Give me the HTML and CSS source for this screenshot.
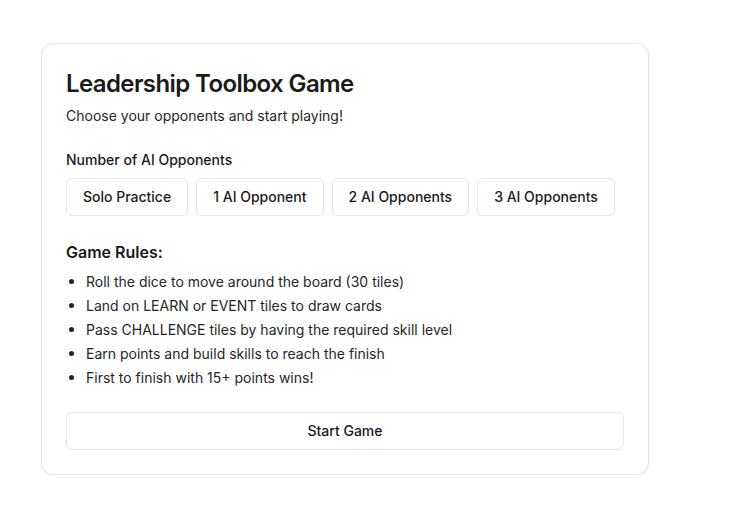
FILE: index.html
```html
<!DOCTYPE html>
<html lang="en">
<head>
<meta charset="utf-8">
<title>Leadership Toolbox Game</title>
<link rel="stylesheet" href="styles.css">
</head>
<body>
<main class="page">
  <section class="card">
    <h1 class="title">Leadership Toolbox Game</h1>
    <p class="subtitle">Choose your opponents and start playing!</p>

    <div class="field">
      <div class="label">Number of AI Opponents</div>
      <div class="options">
        <button class="btn">Solo Practice</button>
        <button class="btn">1 AI Opponent</button>
        <button class="btn">2 AI Opponents</button>
        <button class="btn">3 AI Opponents</button>
      </div>
    </div>

    <div class="rules">
      <h2 class="rules-title">Game Rules:</h2>
      <ul class="rules-list">
        <li>Roll the dice to move around the board (30 tiles)</li>
        <li>Land on LEARN or EVENT tiles to draw cards</li>
        <li>Pass CHALLENGE tiles by having the required skill level</li>
        <li>Earn points and build skills to reach the finish</li>
        <li>First to finish with 15+ points wins!</li>
      </ul>
    </div>

    <button class="btn btn-block">Start Game</button>
  </section>
</main>
</body>
</html>
```

FILE: styles.css
```css
* { box-sizing: border-box; }

body {
  margin: 0;
  background: #ffffff;
  font-family: Inter, "Noto Sans", "Liberation Sans", sans-serif;
  color: #1c1c1c;
}

.page {
  padding: 43px 0 0 41px;
}

.card {
  width: 608px;
  background: #fff;
  border: 1px solid #e5e5e5;
  border-radius: 12px;
  box-shadow: 0 1px 3px rgba(0,0,0,0.04);
  padding: 24px;
}

.title {
  margin: 0;
  font-size: 24px;
  line-height: 32px;
  font-weight: 600;
  letter-spacing: -0.6px;
  color: #1a1a1a;
}

.subtitle {
  margin: 6px 0 0;
  font-size: 14px;
  line-height: 20px;
  color: #262626;
}

.field {
  margin-top: 24px;
}

.label {
  font-size: 14px;
  line-height: 20px;
  font-weight: 500;
  color: #1a1a1a;
}

.options {
  display: flex;
  gap: 8px;
  margin-top: 8px;
}

.btn {
  font-family: inherit;
  font-size: 14px;
  line-height: 20px;
  font-weight: 500;
  color: #1a1a1a;
  background: #fff;
  border: 1px solid #e5e5e5;
  border-radius: 6px;
  padding: 8px 16px;
  height: 38px;
  cursor: pointer;
}

.rules {
  margin-top: 24px;
}

.rules-title {
  margin: 0;
  font-size: 16px;
  line-height: 24px;
  font-weight: 600;
  color: #1a1a1a;
}

.rules-list {
  list-style: none;
  margin: 8px 0 0;
  padding: 0;
  font-size: 14px;
  line-height: 20px;
  color: #262626;
}

.rules-list li {
  display: flex;
}

.rules-list li::before {
  content: "";
  flex: none;
  width: 5px;
  height: 5px;
  border-radius: 50%;
  background: #262626;
  margin: 7px 12px 0 3px;
}

.rules-list li + li {
  margin-top: 4px;
}

.btn-block {
  display: block;
  width: 100%;
  margin-top: 24px;
}
```
